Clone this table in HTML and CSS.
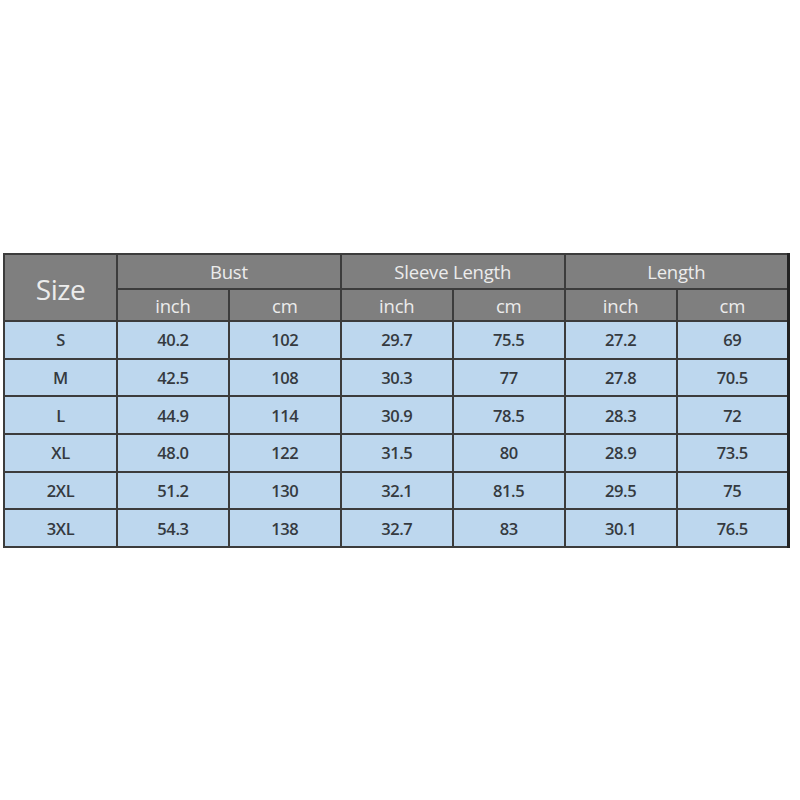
FILE: index.html
```html
<!DOCTYPE html>
<html>
<head>
<meta charset="utf-8">
<link rel="stylesheet" href="styles.css">
</head>
<body>
<div class="wrap">
<table class="chart">
  <colgroup>
    <col class="c0"><col><col><col><col><col><col>
  </colgroup>
  <thead>
    <tr class="h1">
      <th rowspan="2" class="size">Size</th>
      <th colspan="2">Bust</th>
      <th colspan="2">Sleeve Length</th>
      <th colspan="2">Length</th>
    </tr>
    <tr class="h2">
      <th>inch</th><th>cm</th><th>inch</th><th>cm</th><th>inch</th><th>cm</th>
    </tr>
  </thead>
  <tbody>
    <tr><td>S</td><td>40.2</td><td>102</td><td>29.7</td><td>75.5</td><td>27.2</td><td>69</td></tr>
    <tr><td>M</td><td>42.5</td><td>108</td><td>30.3</td><td>77</td><td>27.8</td><td>70.5</td></tr>
    <tr><td>L</td><td>44.9</td><td>114</td><td>30.9</td><td>78.5</td><td>28.3</td><td>72</td></tr>
    <tr><td>XL</td><td>48.0</td><td>122</td><td>31.5</td><td>80</td><td>28.9</td><td>73.5</td></tr>
    <tr><td>2XL</td><td>51.2</td><td>130</td><td>32.1</td><td>81.5</td><td>29.5</td><td>75</td></tr>
    <tr><td>3XL</td><td>54.3</td><td>138</td><td>32.7</td><td>83</td><td>30.1</td><td>76.5</td></tr>
  </tbody>
</table>
</div>
</body>
</html>
```

FILE: styles.css
```css
html, body {
  margin: 0;
  padding: 0;
  background: #ffffff;
}
.wrap {
  padding-top: 253px;
  padding-left: 3px;
}
.chart {
  border-collapse: collapse;
  table-layout: fixed;
  width: 787px;
  font-family: "Open Sans", "Liberation Sans", sans-serif;
  border-top: 2px solid #4a4a4a;
  border-left: 2px solid #3a3a3a;
  border-right: 3px solid #222;
  border-bottom: 2px solid #2e2e2e;
}
.c0 { width: 113px; }
.chart th, .chart td {
  border: 2px solid #3c3c3c;
  text-align: center;
  padding: 0;
}
.chart th {
  background: #7f7f7f;
  color: #ececec;
  font-weight: 400;
  font-size: 18.5px;
  letter-spacing: -0.2px;
}
.h1 th { height: 33px; }
.h2 th { height: 30px; }
.chart th.size {
  font-size: 28px;
  letter-spacing: -0.5px;
  padding-top: 3px;
}
.chart td {
  background: #bdd7ee;
  color: #353a40;
  font-weight: 600;
  font-size: 16.5px;
  letter-spacing: -0.4px;
  height: 35.7px;
}
```
